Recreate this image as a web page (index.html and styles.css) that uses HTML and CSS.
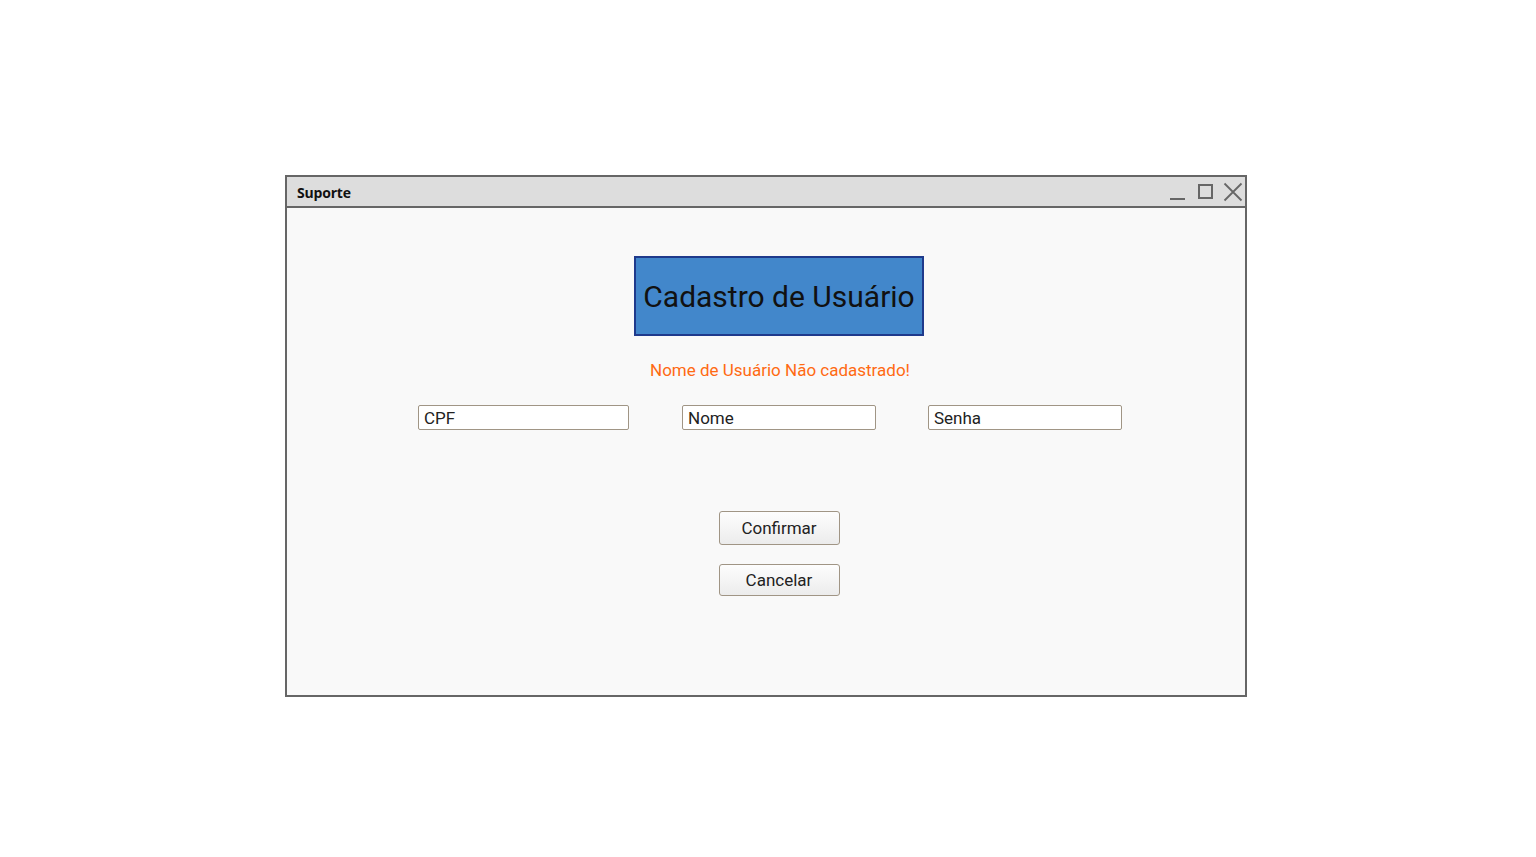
FILE: index.html
```html
<!DOCTYPE html>
<html lang="pt">
<head>
<meta charset="utf-8">
<title>Suporte</title>
<link rel="stylesheet" href="styles.css">
</head>
<body>
<div class="page">
  <div class="window">
    <div class="titlebar">
      <span class="title">Suporte</span>
      <svg class="controls" width="74" height="20" viewBox="0 0 74 20">
        <line x1="1" y1="17" x2="16" y2="17" stroke="#666" stroke-width="2"/>
        <rect x="30" y="3" width="13" height="13" fill="none" stroke="#666" stroke-width="2"/>
        <path d="M55.5 1.5 L72.5 18.5 M72.5 1.5 L55.5 18.5" stroke="#666" stroke-width="1.8" fill="none"/>
      </svg>
    </div>
    <div class="content">
      <h1 class="heading">Cadastro de Usuário</h1>
      <p class="error">Nome de Usuário Não cadastrado!</p>
      <div class="fields">
        <input class="field field-cpf" type="text" value="CPF">
        <input class="field" type="text" value="Nome">
        <input class="field" type="text" value="Senha">
      </div>
      <div class="actions">
        <button class="btn btn-confirm">Confirmar</button>
        <button class="btn btn-cancel">Cancelar</button>
      </div>
    </div>
  </div>
</div>
</body>
</html>
```

FILE: styles.css
```css
* { box-sizing: border-box; }
html, body { margin: 0; padding: 0; background: #ffffff; }
body { font-family: Roboto, "Liberation Sans", Arial, sans-serif; }

.page {
  width: 1536px;
  height: 857px;
  padding-top: 175px;
  padding-left: 285px;
}

.window {
  width: 962px;
  height: 522px;
  border: 2px solid #666666;
  background: #f9f9f9;
  display: flex;
  flex-direction: column;
}

.titlebar {
  height: 31px;
  flex: none;
  background: #dddddd;
  border-bottom: 2px solid #666666;
  display: flex;
  align-items: flex-start;
  justify-content: space-between;
  padding: 0 2px 0 10px;
}

.title {
  font-family: "Open Sans", "Liberation Sans", sans-serif;
  font-weight: 700;
  font-size: 14px;
  line-height: 29px;
  color: #111111;
  letter-spacing: -0.2px;
  padding-top: 1px;
}

.controls {
  display: block;
  margin-top: 5px;
}

.content {
  flex: 1;
  display: flex;
  flex-direction: column;
  align-items: center;
  padding-top: 48px;
}

.heading {
  margin: 0 0 0 26px;
  width: 290px;
  height: 80px;
  background: #4287cb;
  border: 2px solid #1f3a8c;
  display: flex;
  align-items: center;
  justify-content: center;
  font-weight: 400;
  font-size: 30px;
  color: #111111;
  letter-spacing: 0;
}

.error {
  margin: 24px 0 0 28px;
  color: #ff6a13;
  font-size: 17px;
  line-height: 20px;
}

.fields {
  margin: 25px 0 0 8px;
  display: flex;
  gap: 53px;
}

.field {
  height: 25px;
  width: 194px;
  border: 1px solid #a09585;
  border-radius: 2px;
  background: #ffffff;
  font-family: Roboto, "Liberation Sans", sans-serif;
  font-size: 17px;
  color: #222222;
  padding: 1px 5px 0;
  margin: 0;
}
.field-cpf { width: 211px; }
.field:last-child { margin-left: -1px; }

.actions {
  margin: 81px 0 0 26px;
  display: flex;
  flex-direction: column;
  gap: 19px;
}

.btn {
  width: 121px;
  border: 1px solid #a09585;
  border-radius: 3px;
  background: linear-gradient(#fdfdfd, #ececec);
  font-family: Roboto, "Liberation Sans", sans-serif;
  font-size: 17px;
  color: #222222;
  padding: 0;
  margin: 0;
}
.btn-confirm { height: 34px; }
.btn-cancel { height: 32px; }
```
